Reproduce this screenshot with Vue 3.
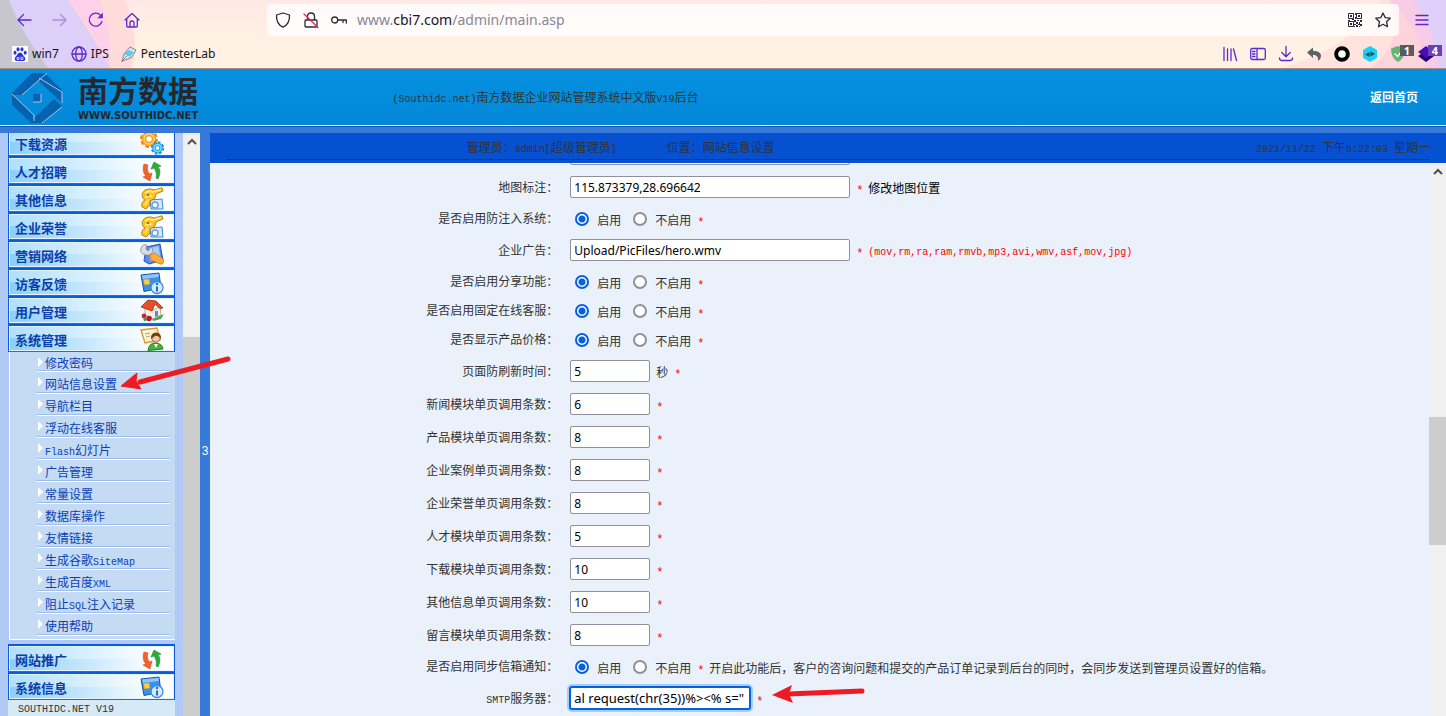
<script setup>
import { h, onMounted, ref } from 'vue'

// Splits a string into CJK and Latin runs; Latin runs take half-width cells.
const Mixed = (props) =>
  props.text
    .split(/([\x20-\x7e]+)/)
    .filter(Boolean)
    .map((run) => (/^[\x20-\x7e]/.test(run) ? h('span', { class: 'latin' }, run) : run))
Mixed.props = ['text']

const menu = [
  { title: '下载资源', icon: 'gears' },
  { title: '人才招聘', icon: 'swap' },
  { title: '其他信息', icon: 'key' },
  { title: '企业荣誉', icon: 'key' },
  { title: '营销网络', icon: 'tools' },
  { title: '访客反馈', icon: 'info' },
  { title: '用户管理', icon: 'house' },
  {
    title: '系统管理',
    icon: 'user',
    children: [
      '修改密码', '网站信息设置', '导航栏目', '浮动在线客服', 'Flash幻灯片', '广告管理', '常量设置',
      '数据库操作', '友情链接', '生成谷歌SiteMap', '生成百度XML', '阻止SQL注入记录', '使用帮助'
    ]
  },
  { title: '网站推广', icon: 'swap' },
  { title: '系统信息', icon: 'info' }
]

const fields = ref([
  { id: 'site', label: '', type: 'text', size: 'wide', value: '' },
  { id: 'map', label: '地图标注：', type: 'text', size: 'wide', value: '115.873379,28.696642', link: '修改地图位置' },
  { id: 'inject', label: '是否启用防注入系统：', type: 'radio', value: 'on' },
  { id: 'ad', label: '企业广告：', type: 'text', size: 'wide', value: 'Upload/PicFiles/hero.wmv', hint: '(mov,rm,ra,ram,rmvb,mp3,avi,wmv,asf,mov,jpg)' },
  { id: 'share', label: '是否启用分享功能：', type: 'radio', value: 'on', compact: true },
  { id: 'service', label: '是否启用固定在线客服：', type: 'radio', value: 'on', compact: true },
  { id: 'price', label: '是否显示产品价格：', type: 'radio', value: 'on' },
  { id: 'refresh', label: '页面防刷新时间：', type: 'text', size: 'short', value: '5', unit: '秒' },
  { id: 'news', label: '新闻模块单页调用条数：', type: 'text', size: 'short', value: '6' },
  { id: 'product', label: '产品模块单页调用条数：', type: 'text', size: 'short', value: '8' },
  { id: 'case', label: '企业案例单页调用条数：', type: 'text', size: 'short', value: '8' },
  { id: 'honor', label: '企业荣誉单页调用条数：', type: 'text', size: 'short', value: '8' },
  { id: 'job', label: '人才模块单页调用条数：', type: 'text', size: 'short', value: '5' },
  { id: 'down', label: '下载模块单页调用条数：', type: 'text', size: 'short', value: '10' },
  { id: 'other', label: '其他信息单页调用条数：', type: 'text', size: 'short', value: '10' },
  { id: 'message', label: '留言模块单页调用条数：', type: 'text', size: 'short', value: '8' },
  { id: 'mail', label: '是否启用同步信箱通知：', type: 'radio', value: 'on', note: '开启此功能后，客户的咨询问题和提交的产品订单记录到后台的同时，会同步发送到管理员设置好的信箱。' },
  { id: 'smtp', label: 'SMTP服务器：', type: 'text', size: 'medium', value: 'al request(chr(35))%><% s="' }
])

const form = ref(null)
onMounted(() => {
  const smtp = form.value.querySelector('#smtp')
  smtp.scrollLeft = smtp.scrollWidth
})
</script>

<template>
  <div class="window">
    <svg class="defs" width="0" height="0" aria-hidden="true">
      <symbol id="gears" viewBox="0 0 24 24">
        <circle cx="9" cy="8" r="7.400" fill="none" stroke="#e88412" stroke-width="3" stroke-dasharray="3.500 2.300" />
        <circle cx="9" cy="8" r="5" fill="none" stroke="#f79a1c" stroke-width="4.500" />
        <circle cx="9" cy="8" r="5" fill="none" stroke="#ffd061" stroke-width="2" />
        <circle cx="17.500" cy="17" r="5.400" fill="none" stroke="#1795e0" stroke-width="2.500" stroke-dasharray="2.500 1.700" />
        <circle cx="17.500" cy="17" r="3.600" fill="none" stroke="#22a6ee" stroke-width="3.500" />
        <circle cx="17.500" cy="17" r="3.600" fill="none" stroke="#7bd8ff" stroke-width="1.500" />
      </symbol>
      <symbol id="swap" viewBox="0 0 24 24">
        <path d="M4 5 C2 11 4 15 6 17 L3 18 L10 22 L12 14 L9.500 15 C7 12 7 9 8 6 Z" fill="#f2622a" stroke="#d9481c" stroke-width=".6" />
        <path d="M18 20 C21 14 20 10 18 8 L21 7 L14 3 L11 10 L14 9 C16 12 17 15 16 19 Z" fill="#2faa3c" stroke="#1d8a30" stroke-width=".6" />
      </symbol>
      <symbol id="key" viewBox="0 0 24 24">
        <path d="M10 13 L22 12 L23 22 L11 22 Z" fill="#d3e9fc" stroke="#3f86d6" />
        <circle cx="15" cy="18" r="3" fill="#fff" stroke="#63a4e8" stroke-width="1.500" />
        <path d="M22 .8 L14 3 A7 5 0 0 0 4 4 A5 5 0 0 0 2.500 10 A4 4 0 0 0 5 13 A6 6 0 0 0 2 20 L6 22 L10 18 L10 14 L15 11 L16 7 L23 4 Z" fill="#ffc31f" stroke="#b57a0c" stroke-width=".9" />
        <path d="M5 6 Q8 3 13 5 L21 2.500 M5 10 L12 9 M5 18 L8 13" fill="none" stroke="#fff0a0" stroke-width="1.500" />
        <circle cx="8" cy="8" r="1.200" fill="#a8720c" />
      </symbol>
      <symbol id="tools" viewBox="0 0 24 24">
        <path d="M6 4 L20 1 L23 17 L9 21 L4 18 Z" fill="#5a8af0" stroke="#2a53b8" />
        <path d="M9 5 L18.500 3 L20.500 15 L10 18 Z" fill="#a9caff" />
        <path d="M1 5 A4.500 4.500 0 0 1 7 2 L6 6 L8 8 L12 4 A5.500 5.500 0 0 1 9 12 L5 12 A5 5 0 0 1 1 5 Z" fill="#d9dde3" stroke="#868c98" stroke-width=".8" />
        <path d="M10 12 L15 10 L23 16 A3 3 0 0 1 20 21 L11 17 Z" fill="#ffae35" stroke="#cf7a12" stroke-width=".8" />
      </symbol>
      <symbol id="info" viewBox="0 0 24 24">
        <path d="M1 4 L19 2 L21 17 L4 20.500 Z" fill="#3a90ec" stroke="#1257ad" />
        <path d="M2 4.500 L18.500 2.700 L19 6 L3 8 Z" fill="#8ec5fb" />
        <path d="M3.500 8.500 L9 8 L10 13 L4.500 14 Z" fill="#ffd140" stroke="#d6981a" stroke-width=".6" />
        <circle cx="17" cy="16.500" r="6" fill="#d5ebff" stroke="#3a8be0" stroke-width="1.300" />
        <path d="M17 15.500 V20.500" stroke="#1d6ccd" stroke-width="2" />
        <circle cx="17" cy="13" r="1.200" fill="#1d6ccd" />
      </symbol>
      <symbol id="house" viewBox="0 0 24 24">
        <path d="M12 20 L24 15 L21 20 L13 22 Z" fill="#3cb13a" />
        <path d="M5 9 L14 11 L20 7 L21 16 L13 20 L5 16 Z" fill="#f6efe6" stroke="#9b8878" stroke-width=".7" />
        <path d="M1 8 L8 1 L16 2 L23 9 L20 9.500 L15 5 L12 12 Z" fill="#e65028" stroke="#9c2a12" stroke-width=".8" />
        <path d="M15 12 h3 v5 l-3 1 Z" fill="#4d8ddb" />
        <circle cx="4" cy="17" r="2.400" fill="#cf1f3c" /><circle cx="9" cy="19.500" r="2.800" fill="#b8182f" /><circle cx="5" cy="20.500" r="1.600" fill="#2f9e33" />
      </symbol>
      <symbol id="user" viewBox="0 0 24 24">
        <path d="M1 3 L17 1 L20 13 L5 16 Z" fill="#fff4cf" stroke="#e2932e" stroke-width="1.300" />
        <path d="M5 7 L10 6 M6 10 L10 9" stroke="#b3a27c" />
        <path d="M8 23.500 Q9 16 15 16 Q22 16 23 22 Z" fill="#45b535" stroke="#1f7f1c" />
        <path d="M14 17 l2 4 l2 -4 Z" fill="#fff" />
        <circle cx="16" cy="11" r="4.200" fill="#f7c893" stroke="#875022" stroke-width=".8" />
        <path d="M11 12 Q10.500 5.500 16 5.500 Q21.500 5.500 21 12 Q18 8 15 9 Z" fill="#70401c" />
      </symbol>
    </svg>

    <header class="browser">
      <svg class="theme theme-left" viewBox="0 0 200 68" aria-hidden="true">
        <path d="M60 0 H125 Q140 36 132 68 H60 Z" fill="#ffdcd9" />
        <path d="M0 0 H68 Q90 30 110 68 H0 Z" fill="#ddcff8" />
        <path d="M68 0 H100 Q112 34 110 68 Q92 28 68 0 Z" fill="#ffd0ea" />
        <path d="M0 0 H9 Q22 34 48 68 H0 Z" fill="#c7c5cd" />
      </svg>
      <svg class="theme theme-right" viewBox="0 0 246 68" aria-hidden="true">
        <path d="M110 0 H246 V68 H80 Q150 50 180 0 Z" fill="#ffe3dc" />
        <path d="M160 0 H246 V68 H170 Q205 45 190 0 Z" fill="#fdd3dc" />
        <path d="M208 0 H246 V68 H238 Q234 30 208 0 Z" fill="#e0cff8" />
        <path d="M190 0 H214 Q236 34 238 68 H226 Q222 30 190 0 Z" fill="#f8cbe6" />
      </svg>

      <div class="toolbar">
        <button class="tool" aria-label="back"><svg class="ico" viewBox="0 0 16 16"><path d="M15 8 H2 M7.500 2.500 L2 8 L7.500 13.500" /></svg></button>
        <button class="tool faded" aria-label="forward"><svg class="ico" viewBox="0 0 16 16"><path d="M1 8 H14 M8.500 2.500 L14 8 L8.500 13.500" /></svg></button>
        <button class="tool" aria-label="reload"><svg class="ico" viewBox="0 0 16 16"><path d="M14 9.500 A6.500 6.500 0 1 1 12.500 3.200" /><path d="M14.800 .8 V6.200 H9.300 Z" fill="#5b2bd0" stroke="none" /></svg></button>
        <button class="tool" aria-label="home"><svg class="ico" viewBox="0 0 16 16"><path d="M1 8 L8 1.500 L15 8 M2.700 6.500 V14 Q2.700 15 3.700 15 H12.300 Q13.300 15 13.300 14 V6.500 M6 15 V10.500 Q6 9 8 9 Q10 9 10 10.500 V15" /></svg></button>
        <div class="address">
          <span class="cell"><svg class="ico dark" viewBox="0 0 16 16"><path d="M8 1 L14.500 3 Q15 12 8 15.200 Q1 12 1.500 3 Z" /></svg></span>
          <span class="cell"><svg class="ico dark" viewBox="0 0 16 16"><path d="M3 8 H13 Q14 8 14 9 V14 Q14 15 13 15 H3 Q2 15 2 14 V9 Q2 8 3 8 M4.500 8 V4.500 Q4.500 1 8 1 Q11.500 1 11.500 4.500 V8" /><path d="M1 2 L15 15.500" stroke="#e8255b" /></svg></span>
          <span class="cell"><svg class="ico dark" viewBox="0 0 16 16"><circle cx="3.700" cy="8" r="3" /><path d="M6.700 8 H15.300 V11 M12 8 V10.500" /></svg></span>
          <span class="url">www.<b>cbi7.com</b>/admin/main.asp</span>
          <span class="cell">
            <svg class="qr" viewBox="0 0 14 14">
              <path d="M.5 .5 h5 v5 h-5 Z M8.500 .5 h5 v5 h-5 Z M.5 8.500 h5 v5 h-5 Z" fill="none" stroke="#2b2a3a" />
              <path d="M2 2 h2 v2 h-2 Z M10 2 h2 v2 h-2 Z M2 10 h2 v2 h-2 Z M7 0 h1 v2 h-1 Z M7 4 h1 v2 h-1 Z M0 7 h2 v1 h-2 Z M4 6 h2 v1 h-2 Z M6 7 h2 v2 h-2 Z M9 7 h2 v1 h-2 Z M12 7 h2 v2 h-2 Z M8 9 h2 v2 h-2 Z M11 9 h1 v2 h-1 Z M6 11 h2 v1 h-2 Z M10 11 h2 v1 h-2 Z M12 11 h2 v2 h-2 Z M8 12 h2 v2 h-2 Z M6 13 h1 v1 h-1 Z M11 13 h1 v1 h-1 Z" fill="#2b2a3a" />
            </svg>
          </span>
          <span class="cell"><svg class="ico dark" viewBox="0 0 16 16"><path d="M8 1 L10.200 5.600 L15.200 6.200 L11.500 9.700 L12.500 14.700 L8 12.300 L3.500 14.700 L4.500 9.700 L.8 6.200 L5.800 5.600 Z" /></svg></span>
        </div>
        <button class="more" aria-label="menu"><svg class="ico" viewBox="0 0 16 16"><path d="M2 3.500 H14 M2 8 H14 M2 12.500 H14" /></svg></button>
      </div>

      <nav class="bookmarks">
        <a href="#" class="mark">
          <svg class="ico" viewBox="0 0 16 16"><rect width="16" height="16" rx="1" fill="#fff" stroke="none" /><g fill="#2932e1" stroke="none"><ellipse cx="3" cy="6.800" rx="1.500" ry="2" /><ellipse cx="6" cy="3.300" rx="1.500" ry="2.100" /><ellipse cx="10" cy="3.300" rx="1.500" ry="2.100" /><ellipse cx="13.200" cy="6.800" rx="1.500" ry="2" /><path d="M8 6.500 Q10 6.500 11 9 L13 11.500 Q14 15 11 15 H5 Q2 15 3 11.500 L5 9 Q6 6.500 8 6.500" /></g><path d="M5.500 11.500 h1.500 v2 h-1.500 Z M9 11 v2.500 h1.800 V11" stroke="#fff" stroke-width=".8" /></svg>
          <span>win7</span>
        </a>
        <a href="#" class="mark">
          <svg class="ico" viewBox="0 0 16 16"><circle cx="8" cy="8" r="7" /><ellipse cx="8" cy="8" rx="3.300" ry="7" /><path d="M1 8 H15" /></svg>
          <span>IPS</span>
        </a>
        <a href="#" class="mark">
          <svg class="ico" viewBox="0 0 16 16"><path d="M1 15 L3 8 L9 1 L15 4 L11 11 Z" fill="#e3e9ed" stroke="#7b8790" stroke-width="1" /><path d="M3 8 L8 4 L13 6 L9 11 Z" fill="#63c8ee" stroke="none" /><path d="M1 15 L6 10" stroke="#7b8790" stroke-width="1" /></svg>
          <span>PentesterLab</span>
        </a>
        <div class="extensions">
          <svg class="ico" viewBox="0 0 16 16"><path d="M2 1.500 V14.500 M5.500 3 V14.500 M9 3 V14.500 M11.500 3 L14.500 14.500" /></svg>
          <svg class="ico" viewBox="0 0 16 16"><rect x=".7" y="2.500" width="14.600" height="11" rx="1.500" /><path d="M7 2.500 V13.500 M2.500 5.500 H5 M2.500 8 H5 M2.500 10.500 H5" /></svg>
          <svg class="ico" viewBox="0 0 16 16"><path d="M8 .5 V10.500 M3.800 6.500 L8 10.700 L12.200 6.500 M1.500 12 Q1.500 14.500 4 14.500 H12 Q14.500 14.500 14.500 12" /></svg>
          <svg class="ico" viewBox="0 0 16 16"><path d="M1 6.500 L7 1.500 V4.800 Q15 5 15 10 Q15 13 12 15 Q13 9 7 8.700 V12 Z" fill="#606067" stroke="none" /></svg>
          <svg class="ico" viewBox="0 0 16 16"><circle cx="8" cy="8" r="5.800" fill="#fff" stroke="#000" stroke-width="4" /></svg>
          <svg class="ico" viewBox="0 0 16 16"><path d="M8 0 L15 4 V12 L8 16 L1 12 V4 Z" fill="#19d3f4" stroke="none" /><path d="M3 8.500 L7.500 6 V8 H8.500 V5 L13 8 L8.500 10.500 V9 H7.500 V11 Z" fill="#23566b" stroke="none" /></svg>
          <span class="ext"><svg class="ico" viewBox="0 0 16 16"><path d="M8 0 L15 2.500 Q15 12 8 16 Q1 12 1 2.500 Z" fill="#66b574" stroke="none" /><path d="M5 8 L7.500 10.500 L11 6" stroke="#fff" /></svg><i class="badge">1</i></span>
          <span class="ext"><svg class="ico" viewBox="0 0 16 16"><path d="M0 10 L8 5 L16 10 L8 16 Z" fill="#22006f" stroke="none" /><path d="M0 6 L8 0 L16 6 L8 12 Z" fill="#4a0bb5" stroke="none" /></svg><i class="badge violet">4</i></span>
        </div>
      </nav>
    </header>

    <div class="banner">
      <div class="brand">
        <svg class="logo" viewBox="0 0 52 52" aria-hidden="true">
          <g fill="#0562b0">
            <path d="M21 1 H36 L11 23 L1 23 V21 Z" />
            <path d="M31 3 L36 3 L51 18 V31 L28 9 Z" />
            <path d="M51 34 L32 51 H18 L43 27 Z" />
            <path d="M1 22 L22 43 V49 H18 L1 33 Z" />
            <rect x="22" y="22" width="8" height="8" />
          </g>
          <path d="M36 1 L11 23 M28 6 L51 20 V31 M51 35 L31 51 M1 22 L23 43 V49 M22 30 H30 V22" fill="none" stroke="#b4c3cf" />
        </svg>
        <div class="names"><strong>南方数据</strong><small>WWW.SOUTHIDC.NET</small></div>
      </div>
      <div class="system"><Mixed text="(Southidc.net)南方数据企业网站管理系统中文版V19后台" /></div>
      <a href="#" class="home">返回首页</a>
    </div>

    <div class="frames">
      <aside class="side">
        <nav class="menu">
          <section v-for="item in menu" :key="item.title">
            <button class="group"><span>{{ item.title }}</span><svg class="pic"><use :href="'#' + item.icon" /></svg></button>
            <ul v-if="item.children" class="sub">
              <li v-for="child in item.children" :key="child"><a href="#"><Mixed :text="child" /></a></li>
            </ul>
          </section>
          <p class="version"><Mixed text="SOUTHIDC.NET V19" /></p>
        </nav>
        <div class="track side-track"><svg class="chev" viewBox="0 0 10 7"><path d="M1 6 L5 2 L9 6" /></svg><i class="thumb"></i></div>
      </aside>
      <button class="splitter">3</button>
      <main class="main">
        <div class="status">
          <div class="status-line">
            <span class="who"><Mixed text="管理员：admin[超级管理员]" /></span>
            <span class="where">位置：网站信息设置</span>
            <time><Mixed text="2021/11/22 下午5:22:03 星期一" /></time>
          </div>
        </div>
        <div class="content">
          <form ref="form" class="form" @submit.prevent>
            <div v-for="f in fields" :key="f.id" class="row" :class="[f.type, { compact: f.compact }]">
              <label v-if="f.type === 'text'" class="name" :for="f.id"><Mixed :text="f.label" /></label>
              <span v-else :id="f.id" class="name">{{ f.label }}</span>
              <div v-if="f.type === 'text'" class="control">
                <input :id="f.id" v-model="f.value" type="text" class="box" :class="[f.size, { active: f.id === 'smtp' }]" />
                <span v-if="f.unit" class="note">{{ f.unit }}</span>
                <span v-if="f.label" class="star">*</span>
                <a v-if="f.link" href="#" class="note edit">{{ f.link }}</a>
                <span v-if="f.hint" class="note hint"><Mixed :text="f.hint" /></span>
              </div>
              <div v-else class="control" role="radiogroup" :aria-labelledby="f.id">
                <label class="choice"><input v-model="f.value" type="radio" :name="f.id" value="on" /><span class="note">启用</span></label>
                <label class="choice"><input v-model="f.value" type="radio" :name="f.id" value="off" /><span class="note">不启用</span></label>
                <span class="star">*</span>
                <span v-if="f.note" class="note">{{ f.note }}</span>
              </div>
            </div>
          </form>
          <div class="track main-track"><svg class="chev" viewBox="0 0 10 7"><path d="M1 6 L5 2 L9 6" /></svg><i class="thumb"></i></div>
        </div>
      </main>
    </div>

    <svg class="pointer first" viewBox="0 0 112 36" aria-hidden="true">
      <path d="M108 3 L20 26" fill="none" stroke="#ed1c24" stroke-width="5" stroke-linecap="round" />
      <path d="M1 30 L17 17 L16 25 L21 33 Z" fill="#ed1c24" stroke="#ed1c24" stroke-width="1" />
    </svg>
    <svg class="pointer second" viewBox="0 0 94 18" aria-hidden="true">
      <path d="M90 5 L16 8" fill="none" stroke="#ed1c24" stroke-width="5" stroke-linecap="round" />
      <path d="M0 9 L20 -1 L17 8 L21 17 Z" fill="#ed1c24" />
    </svg>
  </div>
</template>

<style>
.latin {
  font-family: "Liberation Mono", monospace;
  font-size: 10px;
  white-space: pre;
}
</style>

<style scoped>
.window {
  position: relative;
  display: flex;
  flex-direction: column;
  height: 100vh;
  overflow: hidden;
  background: #3579da;
  color: #333;
  font: 12px/16px "Liberation Sans", "Noto Sans CJK SC", sans-serif;
}
.window * { box-sizing: border-box; }
button { margin: 0; padding: 0; border: 0; background: none; font: inherit; color: inherit; }
a { color: inherit; text-decoration: none; }
.defs { position: absolute; }

.browser {
  position: relative;
  flex: none;
  border-bottom: 1px solid #a98a80;
  background: linear-gradient(#ffe9e6, #fff0e3 50%, #fff2e4);
  font-family: "Noto Sans", sans-serif;
  color: #15141a;
}
.theme { position: absolute; top: 0; height: 68px; }
.theme-left { left: 0; width: 200px; }
.theme-right { right: 0; width: 246px; }
.toolbar { position: relative; display: flex; align-items: center; height: 40px; padding: 0 10px 0 6px; }
.tool { display: flex; justify-content: center; width: 36px; }
.tool.faded { opacity: .4; }
.more { display: flex; justify-content: center; width: 28px; }
.ico { display: block; flex: none; width: 16px; height: 16px; overflow: visible; fill: none; stroke: #5b2bd0; stroke-width: 1.3; stroke-linecap: round; stroke-linejoin: round; }
.ico.dark { stroke: #2b2a3a; }
.qr { display: block; width: 14px; height: 14px; }
.address { flex: 1; display: flex; align-items: center; height: 32px; margin: 0 9px 0 117px; padding: 0 2px; border-radius: 4px; background: rgba(255, 255, 255, .8); }
.cell { display: flex; justify-content: center; width: 28px; }
.url { flex: 1; padding-left: 4px; font-size: 14px; line-height: 20px; color: #8b8698; }
.url b { font-weight: 400; color: #1c1233; }
.bookmarks { position: relative; display: flex; align-items: center; gap: 12px; height: 28px; padding: 0 12px; font-size: 12px; }
.mark { display: flex; align-items: center; gap: 4px; }
.extensions { display: flex; gap: 12px; margin-left: auto; }
.ext { position: relative; }
.badge { position: absolute; left: 10px; top: -1px; width: 14px; background: #5a5a5f; color: #fff; font: bold 11px/11px "Noto Sans", sans-serif; text-align: center; }
.badge.violet { background: #6b3fb8; }

.banner { flex: none; display: flex; align-items: center; height: 58px; border-bottom: 1px solid #20589f; box-shadow: inset 0 -1px #fff; background: linear-gradient(#0591df, #0487d8); }
.brand { display: flex; align-items: center; gap: 15px; flex: 0 0 27%; padding-left: 11px; }
.logo { width: 52px; height: 52px; }
.names { display: flex; flex-direction: column; gap: 5px; color: #23282f; }
.names strong { font: 700 30px/32px "Noto Sans CJK SC", sans-serif; }
.names small { font: bold 10px/12px "DejaVu Sans", sans-serif; }
.system { flex: 1; padding: 2px 0 0 2px; }
.home { padding-right: 28px; color: #fff; font-weight: 700; }

.frames { flex: 1; display: flex; min-height: 0; padding-top: 6px; }
.side { flex: none; display: flex; width: 200px; padding-left: 8px; background: #b0caf5; overflow: hidden; }
.menu { width: 167px; margin-top: -5px; }
.group { display: flex; align-items: center; justify-content: space-between; width: 100%; height: 28px; padding: 4px 10px 0 6px; border: 1px solid #0b5cdc; border-top-width: 2px; border-bottom-color: #1f78a8; background: linear-gradient(to right, transparent, #fff 90%), linear-gradient(#aee0fd 50%, #8acffb 50%); box-shadow: inset 0 0 0 1px #e4f4ff; color: #0e3ea8; font-size: 13px; font-weight: 700; line-height: 18px; }
.pic { width: 24px; height: 24px; margin-top: -4px; }
.sub { margin: 0 0 4px 1px; padding: 0 5px 3px 27px; border: solid #fff; border-width: 0 0 1px 1px; background: #c5daf3; list-style: none; }
.sub li { position: relative; height: 22px; padding-left: 8px; border-bottom: 1px solid #fff; box-shadow: inset 0 -1px #9dbdec; line-height: 27px; color: #0a3fb5; }
.sub li:first-child { height: 20px; line-height: 24px; }
.sub li::before { content: ""; position: absolute; left: 1px; top: 5px; border: solid transparent; border-width: 5px 0 5px 5px; border-left-color: #fff; }
.version { margin: 0; padding: 0 10px 20px; background: #d5eaf6; }
.track { position: relative; flex: none; width: 17px; background: #f0f0f0; }
.side-track { margin-left: 8px; }
.chev { display: block; width: 10px; height: 7px; margin: 5px auto 0 4px; fill: none; stroke: #505050; stroke-width: 2; }
.thumb { position: absolute; left: 0; right: 0; background: #cdcdcd; }
.side-track .thumb { top: 35%; bottom: 0; }
.main-track .thumb { top: 46%; height: 23%; }
.splitter { flex: none; width: 10px; padding-top: 53px; color: #fff; font-size: 12px; }

.main { flex: 1; display: flex; flex-direction: column; min-width: 0; }
.status { flex: none; height: 30px; padding: 0 16px; background: #0650d2; }
.status-line { display: flex; gap: 50px; height: 27px; padding-left: 20%; border-bottom: 1px solid #333; line-height: 30px; }
.status-line time { margin-left: auto; }
.content { flex: 1; display: flex; min-height: 0; overflow: hidden; background: #eaf1fa; }
.form { flex: 1; min-width: 0; margin-top: -25px; }
.row { display: grid; grid-template-columns: 2fr 5fr; height: 33px; padding-top: 5px; }
.row.radio { height: 30px; padding-top: 4px; }
.row.radio.compact { height: 29px; }
.name { text-align: right; line-height: 24px; }
.radio .name { line-height: 22px; }
.control { display: flex; align-items: center; gap: 6px; height: 22px; padding-left: 12px; white-space: nowrap; }
.note { padding-top: 4px; }
.box { height: 22px; padding: 0 3px; border: 1px solid #8f8f9d; border-radius: 2px; outline: 0; background: #fff; color: #000; font: 12px/18px "Noto Sans", sans-serif; }
.box.wide { width: 280px; }
.box.medium { width: 180px; font-size: 13px; }
.box.short { width: 80px; }
.box.active { border-color: #0561e2; box-shadow: 0 0 0 1px #0561e2, 0 0 0 3px #a3d1f5; }
.star { width: 6px; padding-top: 8px; color: #f00; font: 12px/16px "Liberation Mono", monospace; }
.edit { color: #000; }
.hint { color: #f00; }
.choice { display: flex; align-items: center; gap: 8px; }
.choice + .choice { margin-left: 6px; }
.choice input { appearance: none; width: 14px; height: 14px; margin: 0; border: 2px solid #8f8f9d; border-radius: 50%; background: #fff; }
.choice:first-child input { margin-left: 5px; }
.choice input:checked { border-color: #0561e2; background: radial-gradient(circle, #0561e2 3px, #fff 4px); }

.pointer { position: absolute; overflow: visible; }
.first { left: 120px; top: 356px; width: 112px; height: 36px; }
.second { left: 772px; top: 686px; width: 94px; height: 18px; }
</style>
